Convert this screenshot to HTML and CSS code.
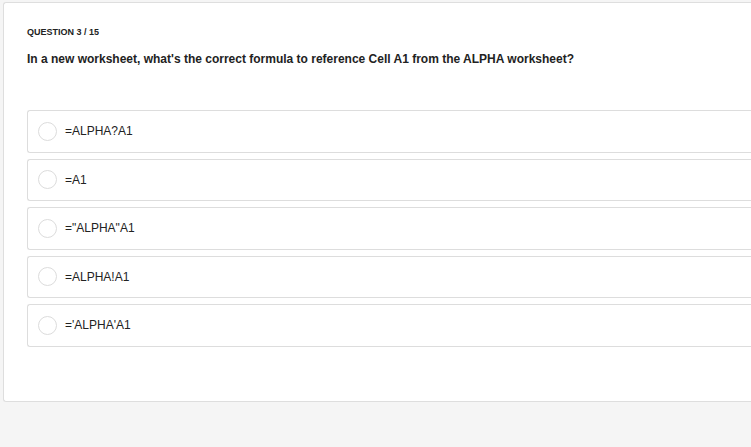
FILE: index.html
```html
<!DOCTYPE html>
<html lang="en">
<head>
<meta charset="utf-8">
<title>Question 3 / 15</title>
<link rel="stylesheet" href="styles.css">
</head>
<body>
<div class="card">
  <div class="qnum">QUESTION 3 / 15</div>
  <div class="qtext">In a new worksheet, what's the correct formula to reference Cell A1 from the ALPHA worksheet?</div>
  <div class="options">
    <label class="option"><span class="radio"></span><span class="label">=ALPHA?A1</span></label>
    <label class="option"><span class="radio"></span><span class="label">=A1</span></label>
    <label class="option"><span class="radio"></span><span class="label">="ALPHA"A1</span></label>
    <label class="option"><span class="radio"></span><span class="label">=ALPHA!A1</span></label>
    <label class="option"><span class="radio"></span><span class="label">='ALPHA'A1</span></label>
  </div>
</div>
</body>
</html>
```

FILE: styles.css
```css
html, body {
  margin: 0;
  padding: 0;
  background: #f5f5f5;
}
body {
  font-family: "Liberation Sans", Arial, sans-serif;
  color: #222;
  height: 447px;
  overflow: hidden;
}
.card {
  box-sizing: border-box;
  margin: 2px 0 0 3px;
  width: calc(100% - 3px);
  background: #fff;
  border: 1px solid #dedede;
  border-right: none;
  border-radius: 3px 0 0 3px;
  padding: 23px 0 54px 23px;
}
.qnum {
  font-size: 9px;
  line-height: 12px;
  font-weight: bold;
  color: #222;
}
.qtext {
  margin-top: 12.5px;
  font-size: 12px;
  line-height: 16px;
  font-weight: bold;
  color: #222;
}
.options {
  margin-top: 43.5px;
  display: flex;
  flex-direction: column;
  gap: 6px;
}
.option {
  box-sizing: border-box;
  height: 42.5px;
  border: 1px solid #dddddd;
  border-right: none;
  border-radius: 3px 0 0 3px;
  display: flex;
  align-items: center;
  padding-left: 9.5px;
  background: #fff;
}
.radio {
  box-sizing: border-box;
  width: 19px;
  height: 19px;
  border: 1px solid #dcdcdc;
  border-radius: 50%;
  background: #fff;
  flex: none;
}
.label {
  margin-left: 8.5px;
  font-size: 12px;
  color: #222;
}
```
